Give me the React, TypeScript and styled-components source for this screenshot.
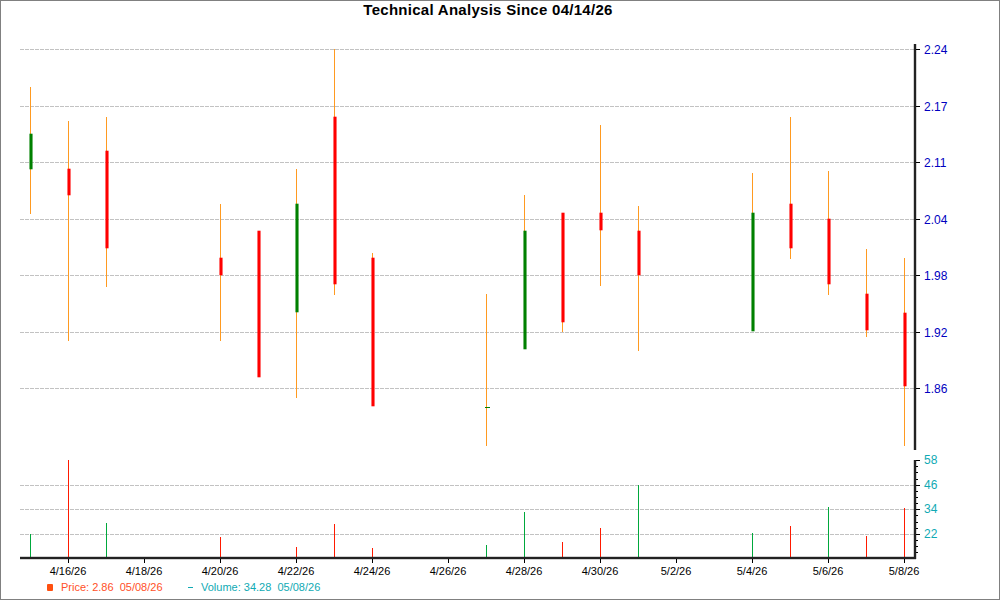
import React from 'react';
import styled, { createGlobalStyle } from 'styled-components';

const CHART_TOP = 20;
const CHART_HEIGHT = 556;
const AXIS_X = 914;
const BASELINE = 557;

const GlobalStyle = createGlobalStyle`
	html, body {
		margin: 0;
		padding: 0;
		background: #fff;
	}
`;

const Root = styled.div`
	width: 1000px;
	height: 600px;
	box-sizing: border-box;
	border: 1px solid #808080;
	background: #fff;
	display: flex;
	flex-direction: column;
	font-family: "Liberation Sans", Arial, sans-serif;
	overflow: hidden;
`;

const Title = styled.h1`
	margin: 0;
	height: 19px;
	line-height: 18px;
	padding-right: 24px;
	font-size: 15px;
	letter-spacing: 0.28px;
	font-weight: bold;
	color: #000;
	text-align: center;
`;

const ChartSvg = styled.svg`
	display: block;
	width: 998px;
	height: ${CHART_HEIGHT}px;
	flex: none;
`;

const AxisLabel = styled.text<{ $tone: 'price' | 'volume' | 'date' }>`
	font-size: ${props => (props.$tone === 'date' ? 11 : 12)}px;
	fill: ${props => ({ price: '#0000c0', volume: '#10aab4', date: '#000' }[props.$tone])};
`;

const Legend = styled.div`
	display: flex;
	align-items: center;
	height: 22px;
	padding-left: 46px;
	font-size: 11px;
`;

const LegendItem = styled.div<{ $color: string; $width: number }>`
	display: flex;
	align-items: center;
	width: ${props => props.$width}px;
	color: ${props => props.$color};
	white-space: pre;
`;

const SquareMarker = styled.span`
	width: 6px;
	height: 7px;
	margin-right: 8px;
	background: #ff5010;
	border-radius: 1px;
`;

const DashMarker = styled.span`
	width: 5px;
	height: 1px;
	margin-right: 8px;
	background: #10aab4;
`;

type Candle = {
	x: number;
	high: number;
	low: number;
	open: number;
	close: number;
	up: boolean;
	volume: number;
	volumeUp: boolean;
};

const candles: Candle[] = [
	{ x: 30, high: 87, low: 214, open: 134, close: 169, up: true, volume: 534, volumeUp: true },
	{ x: 68, high: 121, low: 341, open: 169, close: 195, up: false, volume: 460, volumeUp: false },
	{ x: 106, high: 117, low: 287, open: 151, close: 248, up: false, volume: 523, volumeUp: true },
	{ x: 220, high: 204, low: 341, open: 258, close: 275, up: false, volume: 537, volumeUp: false },
	{ x: 258, high: 231, low: 377, open: 231, close: 377, up: false, volume: 557, volumeUp: false },
	{ x: 296, high: 169, low: 398, open: 204, close: 312, up: true, volume: 547, volumeUp: false },
	{ x: 334, high: 49, low: 295, open: 117, close: 284, up: false, volume: 524, volumeUp: false },
	{ x: 372, high: 253, low: 406, open: 258, close: 406, up: false, volume: 548, volumeUp: false },
	{ x: 486, high: 294, low: 446, open: 407, close: 407, up: true, volume: 545, volumeUp: true },
	{ x: 524, high: 195, low: 349, open: 231, close: 349, up: true, volume: 512, volumeUp: true },
	{ x: 562, high: 213, low: 332, open: 213, close: 322, up: false, volume: 542, volumeUp: false },
	{ x: 600, high: 125, low: 286, open: 213, close: 230, up: false, volume: 528, volumeUp: false },
	{ x: 638, high: 206, low: 351, open: 231, close: 275, up: false, volume: 485, volumeUp: true },
	{ x: 752, high: 173, low: 331, open: 213, close: 331, up: true, volume: 533, volumeUp: true },
	{ x: 790, high: 117, low: 259, open: 204, close: 248, up: false, volume: 526, volumeUp: false },
	{ x: 828, high: 171, low: 295, open: 219, close: 284, up: false, volume: 507, volumeUp: true },
	{ x: 866, high: 249, low: 337, open: 294, close: 330, up: false, volume: 536, volumeUp: false },
	{ x: 904, high: 258, low: 446, open: 313, close: 386, up: false, volume: 508, volumeUp: false },
];

const priceTicks = [
	{ y: 49, label: '2.24' },
	{ y: 106, label: '2.17' },
	{ y: 162, label: '2.11' },
	{ y: 219, label: '2.04' },
	{ y: 275, label: '1.98' },
	{ y: 332, label: '1.92' },
	{ y: 388, label: '1.86' },
];

const volumeTicks = [
	{ y: 460, label: '58' },
	{ y: 485, label: '46' },
	{ y: 509, label: '34' },
	{ y: 534, label: '22' },
];

const volumeMinorTicks = [466, 472, 479, 491, 497, 503, 515, 522, 528, 540, 546, 552];

const dateTicks = [
	{ x: 68, label: '4/16/26' },
	{ x: 144, label: '4/18/26' },
	{ x: 220, label: '4/20/26' },
	{ x: 296, label: '4/22/26' },
	{ x: 372, label: '4/24/26' },
	{ x: 448, label: '4/26/26' },
	{ x: 524, label: '4/28/26' },
	{ x: 600, label: '4/30/26' },
	{ x: 676, label: '5/2/26' },
	{ x: 752, label: '5/4/26' },
	{ x: 828, label: '5/6/26' },
	{ x: 904, label: '5/8/26' },
];

const gridLines = [...priceTicks, ...volumeTicks.slice(1)];

const CandleMark = ({ candle }: { candle: Candle }) => {
	const { x, high, low, open, close, up, volume, volumeUp } = candle;
	const color = up ? '#008000' : '#ff0000';
	const flat = open === close;

	return (
		<g>
			<rect x={x} y={high} width={1} height={low - high} fill="#ff9a20" />
			{flat ? (
				<rect x={x - 1} y={open} width={5} height={1} fill={color} />
			) : (
				<rect x={x - 0.55} y={open - 0.3} width={3.1} height={close - open + 0.6} fill={color} />
			)}
			{volume < BASELINE && (
				<rect
					x={x}
					y={volume}
					width={1}
					height={BASELINE - volume}
					fill={volumeUp ? '#00a83c' : '#ff1a00'}
				/>
			)}
		</g>
	);
};

const Chart = () => (
	<ChartSvg viewBox={`1 ${CHART_TOP} 998 ${CHART_HEIGHT}`}>
		{gridLines.map(line => (
			<line
				key={line.y}
				x1={20}
				x2={AXIS_X}
				y1={line.y + 0.5}
				y2={line.y + 0.5}
				stroke="#c2c2c2"
				strokeDasharray="4 1"
			/>
		))}

		{candles.map(candle => <CandleMark key={candle.x} candle={candle} />)}

		{/* price axis */}
		<rect x={AXIS_X - 0.2} y={44} width={2.4} height={406} fill="#222" />
		{priceTicks.map(tick => (
			<g key={tick.label}>
				<rect x={AXIS_X + 2} y={tick.y} width={4} height={1} fill="#000" />
				<AxisLabel $tone="price" x={924} y={tick.y + 5}>{tick.label}</AxisLabel>
			</g>
		))}

		{/* volume axis */}
		<rect x={AXIS_X - 0.2} y={460} width={2.4} height={99} fill="#222" />
		{volumeTicks.map(tick => (
			<g key={tick.label}>
				<rect x={AXIS_X + 2} y={tick.y} width={4} height={1} fill="#000" />
				<AxisLabel $tone="volume" x={924} y={tick.y + 4}>{tick.label}</AxisLabel>
			</g>
		))}
		{volumeMinorTicks.map(y => (
			<rect key={y} x={AXIS_X + 2} y={y} width={2} height={1} fill="#000" />
		))}

		{/* date axis */}
		<rect x={20} y={BASELINE - 0.2} width={896} height={2.4} fill="#222" />
		{dateTicks.map(tick => (
			<g key={tick.label}>
				<rect x={tick.x} y={BASELINE + 2} width={1} height={4} fill="#000" />
				<AxisLabel $tone="date" x={tick.x} y={575} textAnchor="middle">{tick.label}</AxisLabel>
			</g>
		))}
	</ChartSvg>
);

const App = () => (
	<Root>
		<GlobalStyle />
		<Title>Technical Analysis Since 04/14/26</Title>
		<Chart />
		<Legend>
			<LegendItem $color="#ff5028" $width={141}>
				<SquareMarker />
				Price: 2.86  05/08/26
			</LegendItem>
			<LegendItem $color="#10aab4" $width={140}>
				<DashMarker />
				Volume: 34.28  05/08/26
			</LegendItem>
		</Legend>
	</Root>
);

export default App;
